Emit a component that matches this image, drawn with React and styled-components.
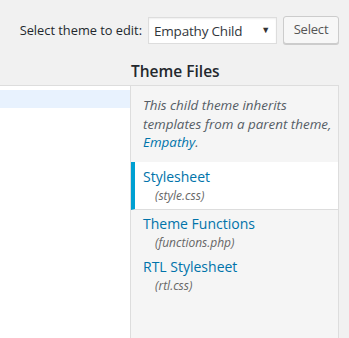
import React from "react";
import styled, { createGlobalStyle } from "styled-components";

const GlobalStyle = createGlobalStyle`
  html, body {
    margin: 0;
    padding: 0;
    background: #f1f1f1;
    font-family: "Open Sans", "Noto Sans", sans-serif;
    color: #444;
  }
`;

const files = [
  { name: "Stylesheet", file: "style.css", current: true },
  { name: "Theme Functions", file: "functions.php" },
  { name: "RTL Stylesheet", file: "rtl.css" },
];

export default function App() {
  return (
    <Page>
      <GlobalStyle />
      <Toolbar>
        <Label>Select theme to edit:</Label>
        <SelectBox>
          <span>Empathy Child</span>
          <Arrow>▼</Arrow>
        </SelectBox>
        <Button>Select</Button>
      </Toolbar>
      <Layout>
        <Heading>Theme Files</Heading>
        <Editor>
          <ActiveLine />
        </Editor>
        <Sidebar>
          <Notice>
            This child theme inherits templates from a parent theme,{" "}
            <ParentLink>Empathy</ParentLink>.
          </Notice>
          <FileList>
            {files.map((f) => (
              <FileItem key={f.file} current={f.current}>
                <FileName>{f.name}</FileName>
                <FilePath>({f.file})</FilePath>
              </FileItem>
            ))}
          </FileList>
        </Sidebar>
      </Layout>
    </Page>
  );
}

const Page = styled.div`
  width: 349px;
  height: 338px;
  overflow: hidden;
`;

const Toolbar = styled.div`
  display: flex;
  justify-content: flex-end;
  align-items: center;
  gap: 6px;
  padding: 16px 10px 0 0;
  height: 28px;
`;

const Label = styled.label`
  font-size: 12.8px;
  color: #23282d;
`;

const SelectBox = styled.div`
  box-sizing: border-box;
  width: 129px;
  height: 27px;
  margin-top: 1px;
  background: #fff;
  border: 1px solid #ddd;
  box-shadow: inset 0 1px 2px rgba(0, 0, 0, 0.07);
  display: flex;
  align-items: center;
  justify-content: space-between;
  padding: 0 6px 0 5px;
  font-size: 13.5px;
  color: #32373c;
  letter-spacing: -0.2px;
`;

const Arrow = styled.span`
  font-size: 9px;
  color: #333;
  margin-top: -2px;
`;

const Button = styled.button`
  box-sizing: border-box;
  width: 56px;
  height: 28px;
  background: #f7f7f7;
  border: 1px solid #ccc;
  border-radius: 3px;
  box-shadow: 0 1px 0 #ccc;
  color: #555;
  font-family: inherit;
  font-size: 13px;
  letter-spacing: -0.2px;
  padding: 0 0 2px;
  margin-top: -1px;
`;

const Layout = styled.div`
  display: grid;
  grid-template-columns: 130px 209px;
  grid-template-rows: 41px 1fr;
  height: 294px;
`;

const Heading = styled.h2`
  grid-column: 2;
  margin: 0;
  padding: 18px 0 0 1px;
  font-size: 15.5px;
  font-weight: 600;
  color: #23282d;
  line-height: 18px;
`;

const Editor = styled.div`
  grid-column: 1;
  grid-row: 2;
  background: #fff;
  border-top: 1px solid #ddd;
  padding-top: 4px;
`;

const ActiveLine = styled.div`
  height: 18px;
  background: #e8f2fe;
`;

const Sidebar = styled.div`
  grid-column: 2;
  grid-row: 2;
  box-sizing: border-box;
  background: #f5f5f5;
  border: 1px solid #ddd;
  border-bottom: none;
  display: flex;
  flex-direction: column;
`;

const Notice = styled.p`
  margin: 0;
  padding: 10px 4px 10px 12px;
  font-size: 13.4px;
  font-style: italic;
  line-height: 18.5px;
  color: #555d66;
`;

const ParentLink = styled.span`
  color: #0073aa;
`;

const FileList = styled.ul`
  list-style: none;
  margin: 0;
  padding: 0;
`;

const FileItem = styled.li`
  display: flex;
  flex-direction: column;
  padding: ${(p) => (p.current ? "5px 0 4px 8px" : "4px 0 1px 12px")};
  background: ${(p) => (p.current ? "#fff" : "transparent")};
  border-left: ${(p) => (p.current ? "4px solid #00a0d2" : "none")};
  border-bottom: ${(p) => (p.current ? "1px solid #ddd" : "none")};
`;

const FileName = styled.span`
  font-size: 14px;
  line-height: 20px;
  color: #0073aa;
`;

const FilePath = styled.span`
  font-size: 12px;
  font-style: italic;
  line-height: 18px;
  color: #666;
  padding-left: 12px;
`;
